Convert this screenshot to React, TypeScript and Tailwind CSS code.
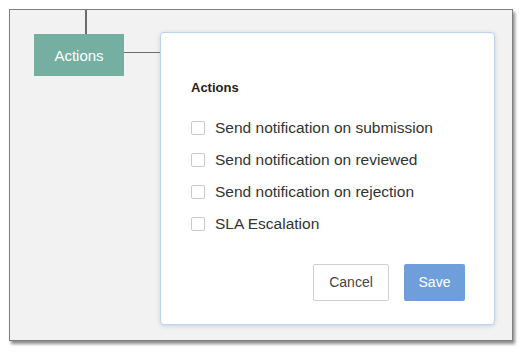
import React from 'react';

const options = [
  'Send notification on submission',
  'Send notification on reviewed',
  'Send notification on rejection',
  'SLA Escalation',
];

const App: React.FC = () => {
  return (
    <div className="w-[523px] h-[355px] bg-white pt-[9px] pl-[9px] font-['Liberation_Sans',Arial,sans-serif]">
      {/* Frame */}
      <div className="w-[504px] h-[332px] bg-[#f2f2f2] border border-[#7f7f7f] shadow-[2px_3px_3px_rgba(0,0,0,0.45)] flex items-start pl-[24px]">
        {/* Actions node */}
        <div className="flex flex-col">
          <div className="ml-[51px] w-[2px] h-[24px] bg-[#6b6b6b]" />
          <div className="w-[90px] h-[42px] pt-[3px] bg-[#74afa1] flex items-center justify-center text-white text-[15px]">
            Actions
          </div>
        </div>
        <div className="mt-[42px] w-[36px] h-[1px] bg-[#6b6b6b]" />

        {/* Popup card */}
        <div className="mt-[22px] w-[335px] h-[293px] bg-white rounded-[4px] border border-[#bdd3ec] shadow-[0_1px_4px_rgba(120,150,190,0.35)] flex flex-col pl-[30px] pr-[29px] pt-[47px]">
          <h3 className="text-[13px] font-bold text-[#222] leading-[16px]">Actions</h3>
          <div className="mt-[23px] flex flex-col gap-[14px]">
            {options.map((o) => (
              <label key={o} className="flex items-center gap-[10px] h-[18px]">
                <span className="w-[14px] h-[14px] border border-[#c9c9c9] rounded-[2px] bg-white" />
                <span className="text-[15.5px] text-[#333]">{o}</span>
              </label>
            ))}
          </div>
          <div className="mt-auto mb-[23px] flex justify-end gap-[15px]">
            <button className="w-[76px] h-[37px] border border-[#cfcfcf] rounded-[2px] bg-white text-[14px] text-[#444]">
              Cancel
            </button>
            <button className="w-[61px] h-[37px] rounded-[2px] bg-[#6f9fda] text-[14px] text-white">
              Save
            </button>
          </div>
        </div>
      </div>
    </div>
  );
};

export default App;
